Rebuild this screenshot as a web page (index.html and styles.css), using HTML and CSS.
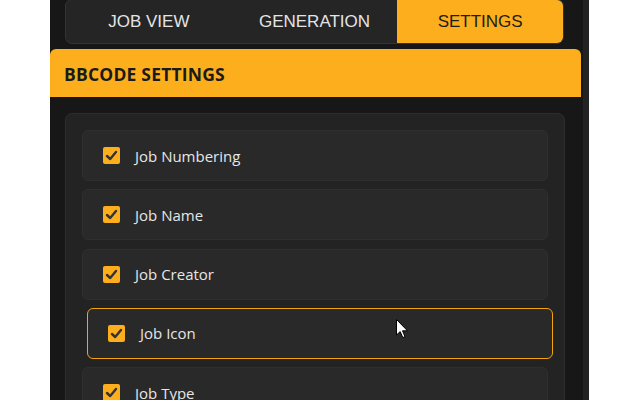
FILE: index.html
```html
<!DOCTYPE html>
<html>
<head>
<meta charset="utf-8">
<link rel="stylesheet" href="styles.css">
</head>
<body>
<div class="shell">
  <div class="panel">
    <div class="tabs">
      <div class="tab">JOB VIEW</div>
      <div class="tab">GENERATION</div>
      <div class="tab active">SETTINGS</div>
    </div>
    <div class="header">BBCODE SETTINGS</div>
    <div class="card">
      <label class="item"><span class="box"><svg viewBox="0 0 17 17" width="17" height="17"><path d="M4 9 L7.2 12 L13 5" fill="none" stroke="#333" stroke-width="2.4" stroke-linecap="round" stroke-linejoin="round"/></svg></span><span class="label">Job Numbering</span></label>
      <label class="item"><span class="box"><svg viewBox="0 0 17 17" width="17" height="17"><path d="M4 9 L7.2 12 L13 5" fill="none" stroke="#333" stroke-width="2.4" stroke-linecap="round" stroke-linejoin="round"/></svg></span><span class="label">Job Name</span></label>
      <label class="item"><span class="box"><svg viewBox="0 0 17 17" width="17" height="17"><path d="M4 9 L7.2 12 L13 5" fill="none" stroke="#333" stroke-width="2.4" stroke-linecap="round" stroke-linejoin="round"/></svg></span><span class="label">Job Creator</span></label>
      <label class="item hover"><span class="box"><svg viewBox="0 0 17 17" width="17" height="17"><path d="M4 9 L7.2 12 L13 5" fill="none" stroke="#333" stroke-width="2.4" stroke-linecap="round" stroke-linejoin="round"/></svg></span><span class="label">Job Icon</span></label>
      <label class="item"><span class="box"><svg viewBox="0 0 17 17" width="17" height="17"><path d="M4 9 L7.2 12 L13 5" fill="none" stroke="#333" stroke-width="2.4" stroke-linecap="round" stroke-linejoin="round"/></svg></span><span class="label">Job Type</span></label>
    </div>
  </div>
  <div class="track"></div>
</div>
<svg class="cursor" width="13" height="20" viewBox="0 0 13 20"><path d="M0.5 0.5 L0.5 16 L4.2 12.6 L6.8 18.6 L9 17.6 L6.5 11.8 L11.5 11.8 Z" fill="#fff" stroke="#000" stroke-width="1"/></svg>
</body>
</html>
```

FILE: styles.css
```css
* { box-sizing: border-box; }
html, body { margin: 0; padding: 0; }
body {
  background: #ffffff;
  width: 640px;
  height: 400px;
  overflow: hidden;
  position: relative;
}
.shell {
  display: flex;
  margin-left: 50px;
  height: 400px;
}
.panel {
  width: 533px;
  background: #171717;
  padding-right: 2px;
}
.track {
  width: 6px;
  background: #232323;
}
.tabs {
  display: flex;
  margin: 0 17px 0 15px;
  height: 45px;
  margin-top: -1px;
  background: #252525;
  border: 1px solid #333333;
  border-radius: 7px;
  overflow: hidden;
}
.tab {
  flex: 1;
  display: flex;
  align-items: center;
  justify-content: center;
  font-family: "Liberation Sans", Arial, sans-serif;
  font-size: 17px;
  color: #e4e4e4;
  padding-top: 1px;
}
.tab.active {
  background: #fcae1c;
  color: #1c1c1c;
}
.header {
  margin-top: 5px;
  height: 48px;
  background: #fcae1c;
  border-radius: 6px 6px 0 0;
  font-family: "Open Sans", "Noto Sans", sans-serif;
  font-weight: 700;
  font-size: 17.5px;
  letter-spacing: 0.2px;
  color: #1a1a1a;
  display: flex;
  align-items: center;
  padding-left: 14px;
  padding-top: 1px;
}
.card {
  margin: 16px 16px 0 15px;
  background: #232323;
  border: 1px solid #2d2d2d;
  border-radius: 7px;
  padding: 16px 16px 0 16px;
  display: flex;
  flex-direction: column;
  gap: 8.3px;
  height: 300px;
}
.item {
  height: 51px;
  flex: none;
  display: flex;
  align-items: center;
  background: #292929;
  border: 1px solid #2f2f2f;
  border-radius: 6px;
  padding-left: 20px;
}
.item.hover {
  transform: translateX(5px);
  border-color: #f3a50f;
}
.box {
  width: 17px;
  height: 17px;
  background: #fcae1c;
  border-radius: 2px;
  display: flex;
  flex: none;
}
.label {
  margin-left: 15px;
  font-family: "Open Sans", "Noto Sans", sans-serif;
  font-size: 15px;
  color: #e6e6e6;
}
.cursor {
  position: absolute;
  left: 396px;
  top: 319px;
}
```
